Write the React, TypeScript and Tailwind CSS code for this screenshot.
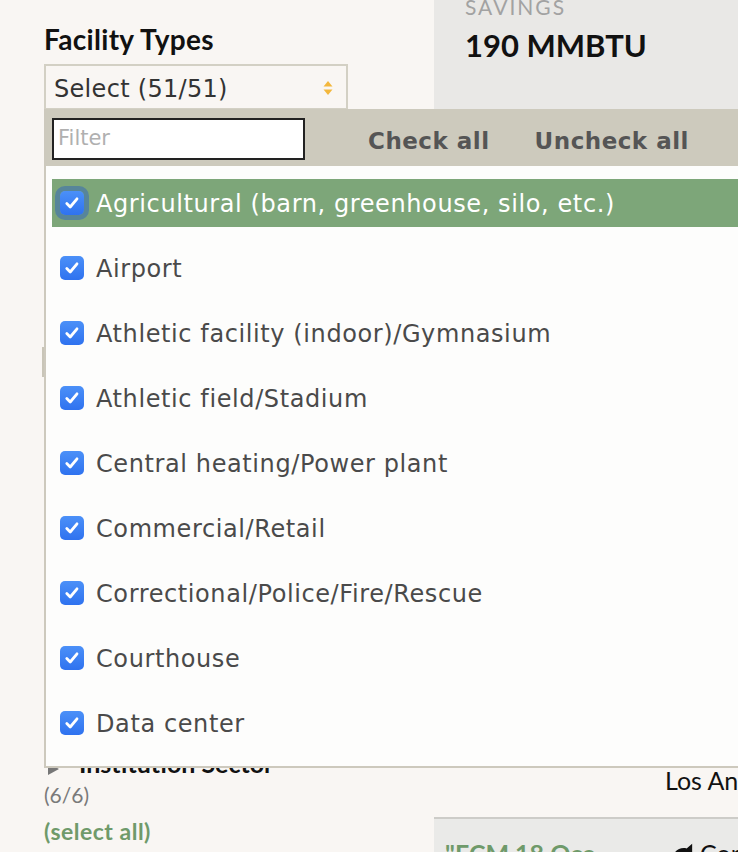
const facilityTypes = [
  'Agricultural (barn, greenhouse, silo, etc.)',
  'Airport',
  'Athletic facility (indoor)/Gymnasium',
  'Athletic field/Stadium',
  'Central heating/Power plant',
  'Commercial/Retail',
  'Correctional/Police/Fire/Rescue',
  'Courthouse',
  'Data center',
];

function CheckBox({ focused }: { focused?: boolean }) {
  return (
    <span
      className={
        'flex h-[24px] w-[24px] shrink-0 items-center justify-center rounded-[5px] bg-gradient-to-b from-[#4b90f8] to-[#2f72ef] ' +
        (focused ? 'ring-[5px] ring-[#3d6fb0]/60' : '')
      }
    >
      <svg width="18" height="18" viewBox="0 0 18 18" fill="none">
        <path
          d="M3.8 9.6 L7.2 13 L14 4.8"
          stroke="white"
          strokeWidth="2.8"
          strokeLinecap="round"
          strokeLinejoin="round"
        />
      </svg>
    </span>
  );
}

export default function App() {
  return (
    <div className="relative flex h-[852px] w-[738px] overflow-hidden bg-[#f9f6f3] font-['Lato',sans-serif]">
      {/* Left column */}
      <div className="flex w-[434px] shrink-0 flex-col pl-[44px]">
        <h2 className="mt-[22px] text-[28px] font-bold leading-[34px] tracking-[0.3px] text-[#111]">Facility Types</h2>
        <div className="mt-[8px] flex h-[46px] w-[304px] items-center justify-between border-2 border-[#d3d0c4] bg-[#f9f6f3] pl-[8px] pr-[13px]">
          <span className="mt-[4px] font-['DejaVu_Sans',sans-serif] text-[24px] leading-[30px] tracking-[0.3px] text-[#333]">Select (51/51)</span>
          <svg width="10" height="16" viewBox="0 0 10 16" className="mt-[2px]">
            <path d="M5 1 L9.5 6.5 H0.5 Z" fill="#f3b73c" />
            <path d="M5 15 L9.5 9.5 H0.5 Z" fill="#f3b73c" />
          </svg>
        </div>

        {/* Content behind the dropdown */}
        <div className="-ml-[2px] mt-[237px] h-[30px] w-[3px] bg-[#c9c5b8]" />

        <div className="mt-[371px] flex items-end gap-[20px] pl-[4px]">
          <svg width="11" height="12" viewBox="0 0 11 12" className="mb-[3px]">
            <path d="M0 0 L11 6 L0 12 Z" fill="#777" />
          </svg>
          <span className="text-[25px] font-bold leading-[30px] text-[#111]">Institution Sector</span>
        </div>
        <div className="mt-[4px] text-[21px] leading-[26px] text-[#7a7a7a]">(6/6)</div>
        <div className="mt-[9px] text-[23px] font-bold leading-[28px] tracking-[0.5px] text-[#6f9a6a]">(select all)</div>
      </div>

      {/* Right column */}
      <div className="flex flex-1 flex-col">
        <div className="h-[110px] shrink-0 bg-[#e9e8e6] pl-[31px]">
          <div className="-mt-[6px] text-[21px] leading-[25px] tracking-[2px] text-[#a2a2a2]">SAVINGS</div>
          <div className="mt-[8px] text-[31px] font-bold leading-[36px] text-[#111]">190 MMBTU</div>
        </div>
        <div className="mt-[655px] shrink-0 whitespace-nowrap pl-[231px] text-[25px] leading-[30px] text-[#111]">Los Angeles</div>
        <div className="mt-[22px] flex h-[60px] shrink-0 items-start border-t-2 border-[#cdccc8] bg-[#eaeae8] pl-[11px] pt-[19px]">
          <span className="w-[225px] shrink-0 whitespace-nowrap text-[25px] font-bold leading-[30px] text-[#6f9a6a]">"ECM 18 Occ</span>
          <span className="flex items-center gap-[6px] whitespace-nowrap text-[25px] leading-[30px] text-[#111]">
            <svg width="24" height="22" viewBox="0 0 26 22">
              <path d="M2 20 C2 10 10 4 18 6 L24 1 L24 14 C20 20 10 22 2 20 Z" fill="#111" />
            </svg>
            Cor
          </span>
        </div>
      </div>

      {/* Dropdown menu */}
      <div className="absolute left-[44px] top-[109px] w-[720px] border-b-2 border-l-2 border-[#cdc9bd] bg-[#fdfdfc]">
        <div className="flex h-[57px] items-center bg-[#cdcabd] pl-[6px]">
          <div className="mt-[2px] flex h-[42px] w-[253px] items-center border-2 border-[#222] bg-white pl-[4px]">
            <span className="font-['DejaVu_Sans',sans-serif] text-[21px] text-[#b0b0b0]">Filter</span>
          </div>
          <span className="ml-[63px] mt-[7px] font-['DejaVu_Sans',sans-serif] text-[23px] font-bold tracking-[0.5px] text-[#555]">Check all</span>
          <span className="ml-[45px] mt-[7px] font-['DejaVu_Sans',sans-serif] text-[23px] font-bold tracking-[0.5px] text-[#555]">Uncheck all</span>
        </div>
        <ul className="flex flex-col gap-[17px] pb-[19px] pl-[6px] pt-[13px]">
          {facilityTypes.map((name, i) => (
            <li
              key={name}
              className={
                'flex h-[48px] items-center gap-[12px] pl-[8px] ' +
                (i === 0 ? 'bg-[#7da679] text-white' : 'text-[#4a4a4a]')
              }
            >
              <CheckBox focused={i === 0} />
              <span className="mt-[2px] whitespace-nowrap font-['DejaVu_Sans',sans-serif] text-[24px] tracking-[0.6px]">{name}</span>
            </li>
          ))}
        </ul>
      </div>
    </div>
  );
}
